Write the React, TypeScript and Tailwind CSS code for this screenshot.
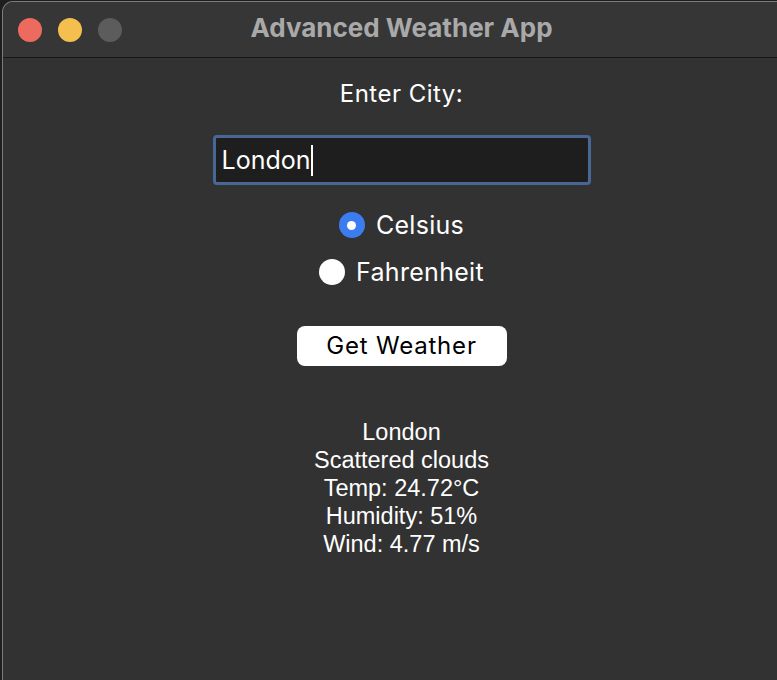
import React from "react";

export default function App() {
  return (
    <div className="h-[680px] w-[777px] overflow-hidden bg-[#1c1f1b]">
      <div className="ml-[2px] mt-[1px] h-[700px] w-[798px] overflow-hidden rounded-t-[11px] border-l border-t border-[#7c7c7c] bg-[#323232]">
        {/* Title bar */}
        <div className="relative flex h-[56px] items-center border-b border-[#161616] bg-[#363636]">
          <div className="ml-[15px] flex gap-[16px]">
            <span className="h-[24px] w-[24px] rounded-full bg-[#ec6a5e]" />
            <span className="h-[24px] w-[24px] rounded-full bg-[#f4bf4f]" />
            <span className="h-[24px] w-[24px] rounded-full bg-[#5c5c5c]" />
          </div>
          <div className="absolute inset-x-0 top-[11px] text-center font-['Inter',sans-serif] text-[26px] font-bold leading-[30px] text-[#a9a9a9]">
            Advanced Weather App
          </div>
        </div>

        {/* Content */}
        <div className="flex flex-col items-center font-['Inter',sans-serif] text-white">
          <div className="mt-[20px] text-[24px] leading-[32px] tracking-[0.5px]">Enter City:</div>

          <div className="mt-[25px] flex h-[50px] w-[378px] items-center rounded-[4px] border-[3px] border-[#476894] bg-[#1e1e1e] pl-[6px]">
            <span className="text-[25px] leading-none">London</span>
            <span className="ml-[1px] h-[31px] w-[2px] bg-white" />
          </div>

          <div className="mt-[26px] flex h-[28px] items-center gap-[11px]">
            <span className="flex h-[26px] w-[26px] items-center justify-center rounded-full bg-[#3b7cf0]">
              <span className="h-[9px] w-[9px] rounded-full bg-white" />
            </span>
            <span className="text-[25px] leading-[28px] tracking-[0.3px]">Celsius</span>
          </div>

          <div className="mt-[19px] flex h-[28px] items-center gap-[11px]">
            <span className="h-[26px] w-[26px] rounded-full bg-white" />
            <span className="text-[25px] leading-[28px] tracking-[0.3px]">Fahrenheit</span>
          </div>

          <div className="mt-[40px] flex h-[40px] w-[210px] items-center justify-center rounded-[8px] bg-white text-[24px] tracking-[0.8px] text-black">
            Get Weather
          </div>

          <div className="mt-[52px] text-center font-['Liberation_Sans',Arial,sans-serif] text-[23.5px] leading-[28px] text-white">
            <div>London</div>
            <div>Scattered clouds</div>
            <div>Temp: 24.72°C</div>
            <div>Humidity: 51%</div>
            <div>Wind: 4.77 m/s</div>
          </div>
        </div>
      </div>
    </div>
  );
}
